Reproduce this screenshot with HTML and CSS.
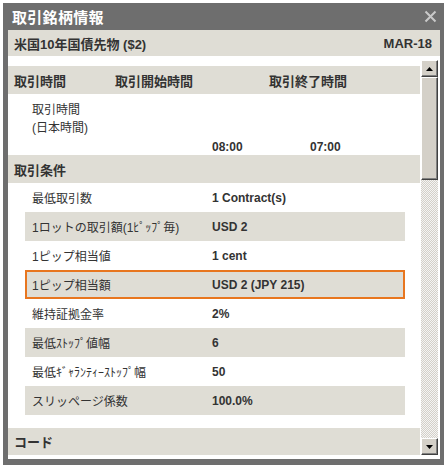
FILE: index.html
```html
<!DOCTYPE html>
<html lang="ja">
<head>
<meta charset="utf-8">
<link rel="stylesheet" href="styles.css">
</head>
<body>
<div class="win">
  <div class="titlebar">
    <span class="title">取引銘柄情報</span>
    <svg class="close" width="13" height="13" viewBox="0 0 13 13"><path d="M1.5 1.5 L11.5 11.5 M11.5 1.5 L1.5 11.5" stroke="#c9c9c9" stroke-width="2" fill="none"/></svg>
  </div>
  <div class="content">
    <div class="band"><span>米国10年国債先物 ($2)</span><span>MAR-18</span></div>
    <div class="pane">
      <div class="list">
        <div class="sect sect3"><span>取引時間</span><span>取引開始時間</span><span>取引終了時間</span></div>
        <div class="timerow">
          <div class="tlabel">取引時間<br>(日本時間)</div>
          <div class="tval">08:00</div>
          <div class="tval">07:00</div>
        </div>
        <div class="sect">取引条件</div>
        <div class="rows">
          <div class="row"><span class="lbl">最低取引数</span><span class="val">1 Contract(s)</span></div>
          <div class="row alt"><span class="lbl">1ロットの取引額(1ﾋﾟｯﾌﾟ毎)</span><span class="val">USD 2</span></div>
          <div class="row"><span class="lbl">1ピップ相当値</span><span class="val">1 cent</span></div>
          <div class="row alt sel"><span class="lbl">1ピップ相当額</span><span class="val">USD 2 (JPY 215)</span></div>
          <div class="row"><span class="lbl">維持証拠金率</span><span class="val">2%</span></div>
          <div class="row alt"><span class="lbl">最低ｽﾄｯﾌﾟ値幅</span><span class="val">6</span></div>
          <div class="row"><span class="lbl">最低ｷﾞｬﾗﾝﾃｨｰｽﾄｯﾌﾟ幅</span><span class="val">50</span></div>
          <div class="row alt"><span class="lbl">スリッページ係数</span><span class="val">100.0%</span></div>
        </div>
        <div class="sect last">コード</div>
      </div>
      <div class="scrollbar">
        <div class="btn"><svg width="7" height="4" viewBox="0 0 7 4"><path d="M3.5 0 L7 4 L0 4 Z" fill="#000"/></svg></div>
        <div class="track">
          <div class="thumb"></div>
          <div class="rest"></div>
        </div>
        <div class="btn"><svg width="7" height="4" viewBox="0 0 7 4"><path d="M0 0 L7 0 L3.5 4 Z" fill="#000"/></svg></div>
      </div>
    </div>
  </div>
</div>
</body>
</html>
```
FILE: styles.css
```css
* { box-sizing: border-box; }
html, body { margin: 0; padding: 0; background: #fff; }
body {
  font-family: "Liberation Sans", "Noto Sans CJK JP", sans-serif;
  color: #333;
  font-size: 12px;
}
.win {
  margin: 3px 0 0 3px;
  width: 441px;
  height: 462px;
  background: #6e6e6e;
  padding: 0 4px 6px 5px;
  display: flex;
  flex-direction: column;
}
.titlebar {
  height: 27px;
  flex: none;
  display: flex;
  align-items: center;
  justify-content: space-between;
  padding: 0 3px 0 4px;
}
.title {
  color: #fff;
  font-weight: bold;
  font-size: 15px;
  letter-spacing: 0.3px;
}
.close { display: block; }
.content {
  flex: 1;
  background: #fff;
  display: flex;
  flex-direction: column;
  min-height: 0;
}
.band {
  height: 26px;
  flex: none;
  background: #dfddd5;
  display: flex;
  align-items: center;
  justify-content: space-between;
  padding: 0 8px 0 6px;
  font-weight: bold;
  font-size: 13px;
}
.pane {
  flex: 1;
  display: flex;
  min-height: 0;
}
.list {
  flex: 1;
  padding-top: 10px;
  overflow: hidden;
}
.sect {
  height: 28px;
  background: #dfddd5;
  display: flex;
  align-items: center;
  padding-left: 6px;
  font-weight: bold;
  font-size: 13px;
}
.sect3 {
  display: grid;
  grid-template-columns: 101px 154px 1fr;
  align-items: center;
}
.sect.last { height: 27px; margin-top: 13px; }
.timerow {
  height: 61px;
  display: grid;
  grid-template-columns: 180px 98px 1fr;
  padding-left: 24px;
}
.tlabel {
  padding-top: 7px;
  line-height: 18px;
}
.tval {
  align-self: end;
  line-height: 18px;
  margin-bottom: -1px;
  font-weight: bold;
}
.rows {
  padding: 0 15px 0 17px;
}
.row {
  height: 29px;
  display: grid;
  grid-template-columns: 180px 1fr;
  align-items: center;
  padding-left: 7px;
}
.row.alt { background: #dfddd5; }
.row.sel {
  border: 2px solid #e8761f;
  padding-left: 5px;
}
.val { font-weight: bold; }
.scrollbar {
  width: 17px;
  flex: none;
  margin: 4px 2px 4px 1px;
  display: flex;
  flex-direction: column;
}
.btn {
  height: 17px;
  flex: none;
  background: #d4d0c8;
  border-top: 1px solid #fff;
  border-left: 1px solid #fff;
  border-right: 1px solid #404040;
  border-bottom: 1px solid #404040;
  box-shadow: inset -1px -1px 0 #808080;
  display: flex;
  align-items: center;
  justify-content: center;
}
.btn svg { display: block; }
.track {
  flex: 1;
  display: flex;
  flex-direction: column;
  background: repeating-conic-gradient(#d4d0c8 0 25%, #f4f4f4 0 50%) 0 0 / 2px 2px;
}
.thumb {
  height: 103px;
  background: #d4d0c8;
  border-top: 1px solid #fff;
  border-left: 1px solid #fff;
  border-right: 1px solid #404040;
  border-bottom: 1px solid #404040;
  box-shadow: inset -1px -1px 0 #808080;
}
.rest { flex: 1; }
```
